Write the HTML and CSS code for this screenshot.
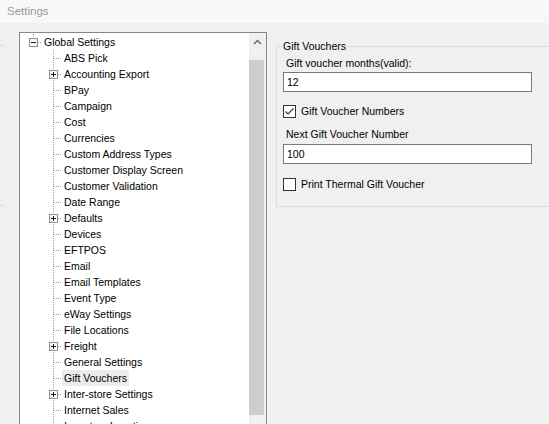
FILE: index.html
```
<!DOCTYPE html>
<html>
<head>
<meta charset="utf-8">
<title>Settings</title>
<link rel="stylesheet" href="styles.css">
</head>
<body>
<div class="titlebar">Settings</div>
<div class="main">
  <div class="gutter"><div class="tick t1"></div><div class="tick t2"></div></div>
  <div class="tree">
    <div class="tree-items">
      <div class="row root"><span class="lines"><span class="col col-root"><svg width="9" height="9" viewBox="0 0 9 9"><rect x="0.5" y="0.5" width="8" height="8" fill="#f7f7f7" stroke="#919191"/><path d="M2 4.5H7" stroke="#1a1a1a"/></svg></span><span class="hl"></span></span><span class="label">Global Settings</span></div>
      <div class="row"><span class="lines"><span class="col"></span><span class="hl"></span></span><span class="label">ABS Pick</span></div>
      <div class="row"><span class="lines"><span class="col"><svg width="9" height="9" viewBox="0 0 9 9"><rect x="0.5" y="0.5" width="8" height="8" fill="#f7f7f7" stroke="#919191"/><path d="M2 4.5H7M4.5 2V7" stroke="#1a1a1a"/></svg></span><span class="hl"></span></span><span class="label">Accounting Export</span></div>
      <div class="row"><span class="lines"><span class="col"></span><span class="hl"></span></span><span class="label">BPay</span></div>
      <div class="row"><span class="lines"><span class="col"></span><span class="hl"></span></span><span class="label">Campaign</span></div>
      <div class="row"><span class="lines"><span class="col"></span><span class="hl"></span></span><span class="label">Cost</span></div>
      <div class="row"><span class="lines"><span class="col"></span><span class="hl"></span></span><span class="label">Currencies</span></div>
      <div class="row"><span class="lines"><span class="col"></span><span class="hl"></span></span><span class="label">Custom Address Types</span></div>
      <div class="row"><span class="lines"><span class="col"></span><span class="hl"></span></span><span class="label">Customer Display Screen</span></div>
      <div class="row"><span class="lines"><span class="col"></span><span class="hl"></span></span><span class="label">Customer Validation</span></div>
      <div class="row"><span class="lines"><span class="col"></span><span class="hl"></span></span><span class="label">Date Range</span></div>
      <div class="row"><span class="lines"><span class="col"><svg width="9" height="9" viewBox="0 0 9 9"><rect x="0.5" y="0.5" width="8" height="8" fill="#f7f7f7" stroke="#919191"/><path d="M2 4.5H7M4.5 2V7" stroke="#1a1a1a"/></svg></span><span class="hl"></span></span><span class="label">Defaults</span></div>
      <div class="row"><span class="lines"><span class="col"></span><span class="hl"></span></span><span class="label">Devices</span></div>
      <div class="row"><span class="lines"><span class="col"></span><span class="hl"></span></span><span class="label">EFTPOS</span></div>
      <div class="row"><span class="lines"><span class="col"></span><span class="hl"></span></span><span class="label">Email</span></div>
      <div class="row"><span class="lines"><span class="col"></span><span class="hl"></span></span><span class="label">Email Templates</span></div>
      <div class="row"><span class="lines"><span class="col"></span><span class="hl"></span></span><span class="label">Event Type</span></div>
      <div class="row"><span class="lines"><span class="col"></span><span class="hl"></span></span><span class="label">eWay Settings</span></div>
      <div class="row"><span class="lines"><span class="col"></span><span class="hl"></span></span><span class="label">File Locations</span></div>
      <div class="row"><span class="lines"><span class="col"><svg width="9" height="9" viewBox="0 0 9 9"><rect x="0.5" y="0.5" width="8" height="8" fill="#f7f7f7" stroke="#919191"/><path d="M2 4.5H7M4.5 2V7" stroke="#1a1a1a"/></svg></span><span class="hl"></span></span><span class="label">Freight</span></div>
      <div class="row"><span class="lines"><span class="col"></span><span class="hl"></span></span><span class="label">General Settings</span></div>
      <div class="row"><span class="lines"><span class="col"></span><span class="hl"></span></span><span class="label sel">Gift Vouchers</span></div>
      <div class="row"><span class="lines"><span class="col"><svg width="9" height="9" viewBox="0 0 9 9"><rect x="0.5" y="0.5" width="8" height="8" fill="#f7f7f7" stroke="#919191"/><path d="M2 4.5H7M4.5 2V7" stroke="#1a1a1a"/></svg></span><span class="hl"></span></span><span class="label">Inter-store Settings</span></div>
      <div class="row"><span class="lines"><span class="col"></span><span class="hl"></span></span><span class="label">Internet Sales</span></div>
      <div class="row"><span class="lines"><span class="col"></span><span class="hl"></span></span><span class="label">Inventory Locations</span></div>
    </div>
    <div class="vscroll">
      <div class="sb-btn"><svg width="17" height="17" viewBox="0 0 17 17"><polyline points="5,11 8.5,7.5 12,11" fill="none" stroke="#606060" stroke-width="1.3"/></svg></div>
      <div class="sb-thumb"></div>
    </div>
  </div>
  <div class="panel">
    <fieldset class="group">
      <legend>Gift Vouchers</legend>
      <div class="field-label">Gift voucher months(valid):</div>
      <input class="textbox" type="text" value="12">
      <div class="check">
        <svg width="13" height="13" viewBox="0 0 13 13"><rect x="0.5" y="0.5" width="12" height="12" fill="#fff" stroke="#333"/><polyline points="2.5,6.5 5,9 10.5,3.5" fill="none" stroke="#333" stroke-width="1.1"/></svg>
        <span>Gift Voucher Numbers</span>
      </div>
      <div class="field-label m-next">Next Gift Voucher Number</div>
      <input class="textbox tb2" type="text" value="100">
      <div class="check check2">
        <svg width="13" height="13" viewBox="0 0 13 13"><rect x="0.5" y="0.5" width="12" height="12" fill="#fff" stroke="#333"/></svg>
        <span>Print Thermal Gift Voucher</span>
      </div>
    </fieldset>
  </div>
</div>
</body>
</html>
```
FILE: styles.css
```
html, body {
  margin: 0;
  width: 549px;
  height: 424px;
  overflow: hidden;
}
body {
  background: #f0f0f0;
  font-family: "Liberation Sans", Arial, sans-serif;
  font-size: 10.5px;
  color: #000;
}
.titlebar {
  height: 23px;
  line-height: 23px;
  padding-left: 7px;
  background: #f8f8f8;
  color: #9a9a9a;
  font-size: 11.5px;
}
.main {
  display: flex;
  align-items: flex-start;
}
.gutter {
  width: 19px;
  flex: none;
  display: flex;
  flex-direction: column;
}
.tick {
  width: 4px;
  height: 1px;
  background: #dcdcdc;
}
.t1 { margin-top: 22px; }
.t2 { margin-top: 159px; }
.tree {
  flex: none;
  width: 248px;
  height: 410px;
  margin-top: 9px;
  box-sizing: border-box;
  border: 1px solid #828790;
  background: #fff;
  display: flex;
}
.tree-items {
  flex: 1;
  min-width: 0;
  padding-top: 1px;
  overflow: hidden;
}
.row {
  display: flex;
  height: 16px;
}
.lines {
  display: flex;
  flex: none;
  height: 16px;
  padding-left: 29px;
}
.root .lines {
  padding-left: 9px;
}
.col {
  width: 9px;
  height: 16px;
  flex: none;
  background-image:
    linear-gradient(#a0a0a0 1px, transparent 1px),
    repeating-linear-gradient(to right, #a0a0a0 0 1px, transparent 1px 2px);
  background-size: 1px 2px, 4px 1px;
  background-repeat: repeat-y, no-repeat;
  background-position: 4px 0, 5px 8px;
}
.col-root {
  background-image: linear-gradient(to bottom, #a0a0a0 0 1px, transparent 1px 2px, #a0a0a0 2px 3px, transparent 3px);
  background-size: 1px 16px;
  background-repeat: no-repeat;
  background-position: 4px 0;
}
.col svg {
  display: block;
  margin-top: 4px;
}
.hl {
  width: 4px;
  height: 16px;
  flex: none;
  background: repeating-linear-gradient(to right, #a0a0a0 0 1px, transparent 1px 2px) 0 8px / 4px 1px no-repeat;
}
.label {
  padding: 0 2px;
  line-height: 16px;
  white-space: nowrap;
}
.label.sel {
  background: #ececec;
}
.vscroll {
  width: 17px;
  flex: none;
  background: #f0f0f0;
  display: flex;
  flex-direction: column;
}
.sb-btn {
  height: 17px;
}
.sb-btn svg {
  display: block;
}
.sb-thumb {
  width: 15px;
  height: 355px;
  margin-top: 10px;
  background: #cdcdcd;
}
.panel {
  flex: 1;
  min-width: 0;
}
.group {
  margin: 17px 0 0 9px;
  padding: 0 6px 15px 6px;
  border: 1px solid #dcdcdc;
  width: 300px;
  box-sizing: border-box;
  min-width: 0;
}
.group legend {
  padding: 0 1px;
  margin-left: -1px;
  line-height: 13px;
  font-size: 10.5px;
}
.field-label {
  margin: 4px 0 0 3px;
  line-height: 13px;
  white-space: nowrap;
}
.textbox {
  display: block;
  box-sizing: border-box;
  width: 249px;
  height: 20px;
  margin: 2px 0 0 0;
  border: 1px solid #7a7a7a;
  background: #fff;
  padding: 0 3px;
  font: inherit;
  color: #000;
  outline: none;
}
.check {
  display: flex;
  align-items: center;
  height: 13px;
  margin-top: 13px;
  white-space: nowrap;
}
.check svg {
  flex: none;
  display: block;
}
.check span {
  margin-left: 5px;
  line-height: 13px;
}
.m-next { margin-top: 10px; }
.tb2 { margin-top: 3px; }
.check2 { margin-top: 14px; }
```
